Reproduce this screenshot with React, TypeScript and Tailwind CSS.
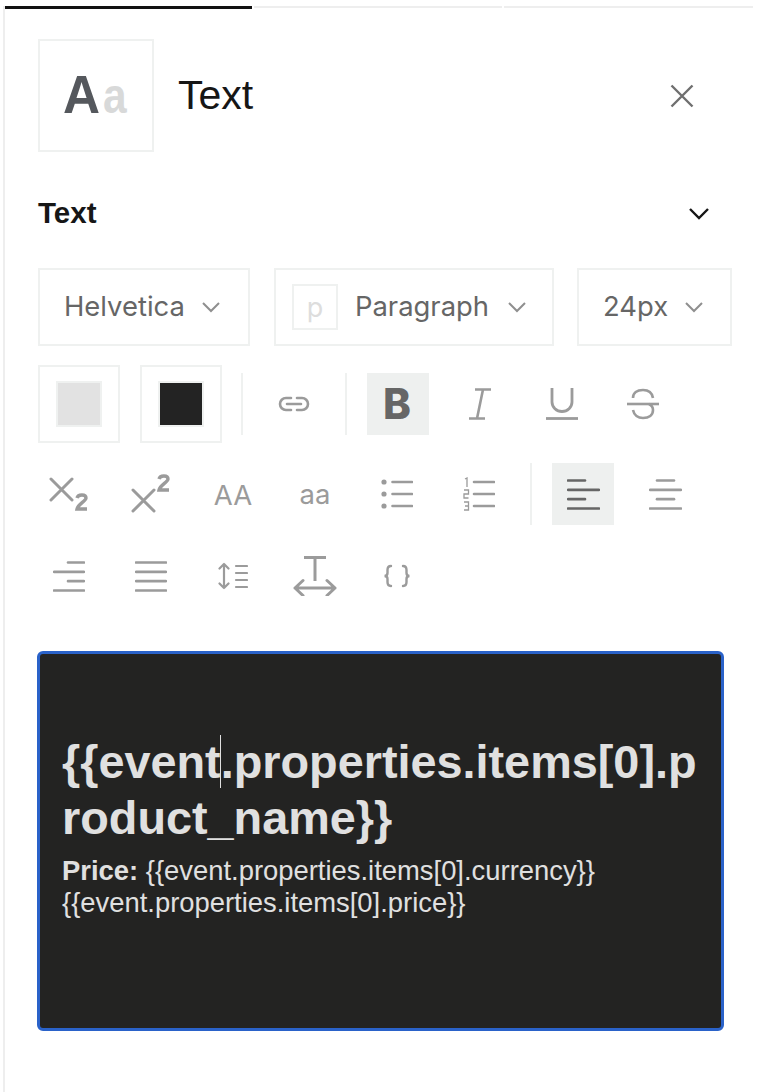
import React from "react";

const G = "#9b9b9b";

function Chevron({ className = "" }: { className?: string }) {
  return (
    <svg width="20" height="12" viewBox="0 0 20 12" fill="none" stroke="#8f8f8f" strokeWidth="2" className={className}>
      <path d="M2 2l8 8 8-8" />
    </svg>
  );
}

function Cell({ active = false, children }: { active?: boolean; children: React.ReactNode }) {
  return (
    <div className={"flex h-[62px] w-[62px] shrink-0 items-center justify-center " + (active ? "bg-[#eef0ef]" : "")}>
      {children}
    </div>
  );
}

function Lines({ rows, color = G, w = 32, h = 31 }: { rows: [number, number][]; color?: string; w?: number; h?: number }) {
  return (
    <svg width={w} height={h} viewBox={`0 0 ${w} ${h}`} fill="none" stroke={color} strokeWidth="2.6" strokeLinecap="round">
      {rows.map(([a, b], i) => (
        <path key={i} d={`M${a} ${1.5 + (i * (h - 3)) / (rows.length - 1)}H${b}`} />
      ))}
    </svg>
  );
}

export default function App() {
  return (
    <div className="h-[1092px] w-[768px] overflow-hidden bg-white pl-[3px] pt-[6px] font-['Liberation_Sans',sans-serif]">
      <div className="h-[1086px] w-[750px] border-l-2 border-[#eeeeee]">
        <div className="flex h-[3px]">
          <div className="h-[3px] w-[248px] bg-[#111111]" />
          <div className="ml-[2px] h-[2px] w-[248px] bg-[#eeeeee]" />
          <div className="ml-[2px] h-[2px] w-[250px] bg-[#eeeeee]" />
        </div>

        <div className="ml-[33px] mt-[30px] flex w-[656px] items-center">
          <div className="flex h-[113px] w-[116px] items-baseline justify-center border-2 border-[#eff1f0] pt-[26px]">
            <span className="origin-right scale-x-[0.95] text-[54px] font-bold leading-none text-[#55585d]">A</span>
            <span className="ml-[3px] origin-left scale-x-[0.85] text-[50px] font-bold leading-none text-[#d8d9d9]">a</span>
          </div>
          <span className="ml-[24px] text-[41px] leading-none text-[#161616]">Text</span>
          <svg width="24" height="24" viewBox="0 0 24 24" fill="none" stroke="#6f6f6f" strokeWidth="2.4" className="ml-auto">
            <path d="M1.5 1.5l21 21M22.5 1.5l-21 21" />
          </svg>
        </div>

        <div className="ml-[33px] mt-[44px] flex h-[34px] w-[672px] items-center justify-between">
          <span className="text-[29.5px] font-bold leading-none text-[#161616]">Text</span>
          <svg width="22" height="13" viewBox="0 0 22 13" fill="none" stroke="#161616" strokeWidth="2.4">
            <path d="M2 2l9 9 9-9" />
          </svg>
        </div>

        <div className="ml-[33px] mt-[38px] flex font-['Inter',sans-serif] text-[27.4px] leading-none text-[#666666]">
          <div className="flex h-[78px] w-[212px] items-center justify-between border-2 border-[#eff1f0] pl-[24px] pr-[27px]">
            <span>Helvetica</span>
            <Chevron />
          </div>
          <div className="ml-[24px] flex h-[78px] w-[280px] items-center border-2 border-[#eff1f0] pl-[16px] pr-[25px]">
            <span className="flex h-[46px] w-[46px] items-center justify-center border-2 border-[#eff1f0] text-[27px] text-[#dddddd]">p</span>
            <span className="ml-[17px]">Paragraph</span>
            <Chevron className="ml-auto" />
          </div>
          <div className="ml-[23px] flex h-[78px] w-[155px] items-center justify-between border-2 border-[#eff1f0] pl-[24px] pr-[26px]">
            <span>24px</span>
            <Chevron />
          </div>
        </div>

        <div className="ml-[33px] mt-[19px] flex h-[78px] items-center">
          <div className="flex h-[78px] w-[82px] items-center justify-center border-2 border-[#eff1f0]">
            <div className="h-[46px] w-[46px] border-2 border-[#eff1f0] bg-[#e2e2e2]" />
          </div>
          <div className="ml-[20px] flex h-[78px] w-[82px] items-center justify-center border-2 border-[#eff1f0]">
            <div className="h-[46px] w-[46px] border-2 border-[#eff1f0] bg-[#232323]" />
          </div>
          <div className="ml-[19px] h-[62px] w-[2px] bg-[#eff1f0]" />
          <div className="ml-[20px]">
            <Cell>
              <svg width="32" height="16" viewBox="0 0 32 16" fill="none" stroke={G} strokeWidth="2.6" strokeLinecap="round">
                <path d="M13 2H8a6 6 0 0 0 0 12h5M19 2h5a6 6 0 0 1 0 12h-5M9 8h14" />
              </svg>
            </Cell>
          </div>
          <div className="ml-[20px] h-[62px] w-[2px] bg-[#eff1f0]" />
          <div className="ml-[20px]">
            <Cell active>
              <span className="mr-[2px] font-['Inter',sans-serif] text-[42px] font-extrabold leading-none text-[#666666]">B</span>
            </Cell>
          </div>
          <div className="ml-[20px]">
            <Cell>
              <svg width="24" height="32" viewBox="0 0 24 32" fill="none" stroke={G} strokeWidth="2.6">
                <path d="M7 1.5h16M1 30.5h16M15 1.5L9 30.5" />
              </svg>
            </Cell>
          </div>
          <div className="ml-[20px]">
            <Cell>
              <svg width="32" height="32" viewBox="0 0 32 32" fill="none" stroke={G} strokeWidth="2.8">
                <path d="M6 0v14a10 9.500 0 0 0 20 0V0" />
                <path d="M0 30.500h32" />
              </svg>
            </Cell>
          </div>
          <div className="ml-[19px]">
            <Cell>
              <svg width="32" height="32" viewBox="0 0 32 32" fill="none" stroke={G} strokeWidth="2.6">
                <path d="M26 10C25 4 21 2 16 2 10 2 6 5 6 10" />
                <path d="M6 22C7 27 11 30 16 30 22 30 26 27 26 22 26 19 24 17 22 16" />
                <path d="M0 16h32" />
              </svg>
            </Cell>
          </div>
        </div>

        <div className="ml-[33px] mt-[20px] flex h-[62px] gap-[20px]">
          <Cell>
            <svg width="40" height="34" viewBox="0 0 40 34" fill="none" stroke={G} strokeWidth="3" strokeLinecap="round">
              <path d="M2 2l21 21M23 2L2 23" />
              <path d="M28 21c1-4 9-4 9 0 0 3-8 6-9 11h10" strokeWidth="3.400" strokeLinecap="butt" />
            </svg>
          </Cell>
          <Cell>
            <svg width="40" height="40" viewBox="0 0 40 40" fill="none" stroke={G} strokeWidth="3" strokeLinecap="round">
              <path d="M2 16l21 21M23 16L2 37" />
              <path d="M28 5c1-4 9-4 9 0 0 3-8 6-9 11h10" strokeWidth="3.400" strokeLinecap="butt" />
            </svg>
          </Cell>
          <Cell>
            <span className="pt-[3px] font-['Inter',sans-serif] text-[27.5px] leading-none text-[#9b9b9b]">AA</span>
          </Cell>
          <Cell>
            <span className="pt-[2px] font-['Inter',sans-serif] text-[27.5px] leading-none text-[#9b9b9b]">aa</span>
          </Cell>
          <Cell>
            <svg width="32" height="30" viewBox="0 0 32 30" fill={G} stroke={G} strokeWidth="2.6" strokeLinecap="round">
              <circle cx="3" cy="3" r="1.600" strokeWidth="2" />
              <circle cx="3" cy="15" r="1.600" strokeWidth="2" />
              <circle cx="3" cy="27" r="1.600" strokeWidth="2" />
              <path d="M11.500 3H31M11.500 15H31M11.500 27H31" />
            </svg>
          </Cell>
          <Cell>
            <svg width="32" height="34" viewBox="0 0 32 34" fill="none" stroke={G} strokeLinecap="round">
              <path d="M11 5H31M11 17H31M11 29H31" strokeWidth="2.600" />
              <path d="M2 2l2-1v9M1 13H5.500v4H1v4H5.500M1 25H5.500v8H1M2 29H5.500" strokeWidth="1.300" strokeLinecap="butt" />
            </svg>
          </Cell>
          <div className="flex items-center">
            <div className="h-[62px] w-[2px] bg-[#eff1f0]" />
          </div>
          <div>
            <Cell active>
              <Lines rows={[[1, 18], [1, 32], [1, 18], [1, 32]]} color="#666666" w={33} />
            </Cell>
          </div>
          <div>
            <Cell>
              <Lines rows={[[8, 25], [1, 32], [8, 25], [1, 32]]} w={33} />
            </Cell>
          </div>
        </div>

        <div className="ml-[33px] mt-[20px] flex h-[62px] gap-[20px]">
          <Cell>
            <Lines rows={[[15, 31], [1, 31], [15, 31], [1, 31]]} w={32} />
          </Cell>
          <Cell>
            <Lines rows={[[1, 31], [1, 31], [1, 31], [1, 31]]} w={32} />
          </Cell>
          <Cell>
            <svg width="30" height="28" viewBox="0 0 30 28" fill="none" stroke={G} strokeWidth="2.2" strokeLinecap="round" strokeLinejoin="round">
              <path d="M6 2v24M1.500 6.500L6 2l4.500 4.500M1.500 21.500L6 26l4.500-4.500" />
              <path d="M18 4H29M18 11H29M18 18H29M18 25H29" />
            </svg>
          </Cell>
          <Cell>
            <svg width="44" height="40" viewBox="0 0 44 40" fill="none" stroke={G} strokeWidth="3">
              <path d="M11 1.500h22M22 1.500V25" />
              <path d="M2 32h40M10 24.500L2 32l8 7.500M34 24.500L42 32l-8 7.500" strokeLinecap="round" strokeLinejoin="round" />
            </svg>
          </Cell>
          <Cell>
            <svg width="28" height="24" viewBox="0 0 28 24" fill="none" stroke={G} strokeWidth="2.400" strokeLinecap="round">
              <path d="M8 2C5 2 4.500 3.500 4.500 6V9C4.500 11 3 12 1.500 12 3 12 4.500 13 4.500 15V18C4.500 20.500 5 22 8 22" />
              <path d="M20 2C23 2 23.500 3.500 23.500 6V9C23.500 11 25 12 26.500 12 25 12 23.500 13 23.500 15V18C23.500 20.500 23 22 20 22" />
            </svg>
          </Cell>
        </div>

        <div className="ml-[32px] mt-[44px] h-[380px] w-[687px] rounded-[6px] border-[3px] border-[#2a62c9] bg-[#232322] pl-[22px] pr-[20px] pt-[80px] text-[#e0e0e0]">
          <div className="break-all text-[46.800px] font-bold leading-[56px]">
            {"{{event"}
            <span className="relative">
              <span className="absolute left-[-1px] top-[-1px] h-[53px] w-[1px] bg-[#e0e0e0]" />
            </span>
            {".properties.items[0].product_name}}"}
          </div>
          <div className="mt-[9px] text-[27.400px] leading-[32px]">
            <strong>Price:</strong> {"{{event.properties.items[0].currency}}"}
            <br />
            {"{{event.properties.items[0].price}}"}
          </div>
        </div>
      </div>
    </div>
  );
}
